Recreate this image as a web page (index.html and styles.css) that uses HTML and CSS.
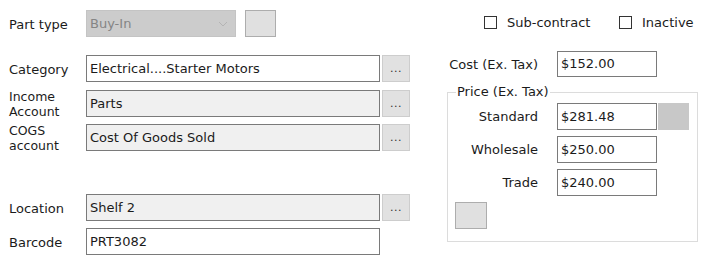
FILE: index.html
```html
<!DOCTYPE html>
<html lang="en">
<head>
  <meta charset="UTF-8" />
  <title>Part Details</title>
  <link rel="stylesheet" href="styles.css">
</head>
<body>

  <div class="form">
    <div class="left">
      <div class="row row-type">
        <label class="lbl">Part type</label>
        <div class="combo">
          <span>Buy-In</span>
          <svg width="10" height="6" viewBox="0 0 10 6"><path d="M1 1 L5 5 L9 1" fill="none" stroke="#b4b4b4" stroke-width="1"/></svg>
        </div>
        <div class="sq-btn"></div>
      </div>

      <div class="row row-cat">
        <label class="lbl">Category</label>
        <div class="field">Electrical....Starter Motors</div>
        <div class="dots">...</div>
      </div>

      <div class="row row-income">
        <label class="lbl two">Income<br>Account</label>
        <div class="field grey">Parts</div>
        <div class="dots">...</div>
      </div>

      <div class="row row-cogs">
        <label class="lbl two">COGS<br>account</label>
        <div class="field grey">Cost Of Goods Sold</div>
        <div class="dots">...</div>
      </div>

      <div class="row row-loc">
        <label class="lbl">Location</label>
        <div class="field grey">Shelf 2</div>
        <div class="dots">...</div>
      </div>

      <div class="row row-bar">
        <label class="lbl">Barcode</label>
        <div class="field">PRT3082</div>
      </div>
    </div>

    <div class="right">
      <div class="checks">
        <label class="check sub"><span class="box"></span>Sub-contract</label>
        <label class="check"><span class="box"></span>Inactive</label>
      </div>

      <div class="row price-row cost">
        <label class="plbl cost-lbl">Cost (Ex. Tax)</label>
        <div class="field money">$152.00</div>
      </div>

      <fieldset class="price">
        <legend>Price (Ex. Tax)</legend>
        <div class="row price-row">
          <label class="plbl">Standard</label>
          <div class="field money">$281.48</div>
          <div class="swatch"></div>
        </div>
        <div class="row price-row">
          <label class="plbl">Wholesale</label>
          <div class="field money">$250.00</div>
        </div>
        <div class="row price-row">
          <label class="plbl">Trade</label>
          <div class="field money">$240.00</div>
        </div>
        <div class="sq-btn small"></div>
      </fieldset>
    </div>
  </div>

</body>
</html>
```

FILE: styles.css
```css
body {
  margin: 0;
  font-family: 'DejaVu Sans', sans-serif;
  font-size: 13px;
  color: #1b1b1b;
  background: #fff;
}

.form {
  display: grid;
  grid-template-columns: 440px 1fr;
  width: 714px;
  height: 256px;
}

.left {
  padding: 10px 0 0 9px;
}

.row {
  display: flex;
  align-items: center;
}

.left .row {
  height: 27px;
}

.lbl {
  width: 77px;
  flex: none;
  line-height: 15px;
  padding-top: 2px;
}

.lbl.two {
  padding-top: 0;
  font-size: 12.5px;
}

.row-cat { margin-top: 18px; }
.row-income { margin-top: 8px; }
.row-cogs { margin-top: 7px; }
.row-loc { margin-top: 43px; }
.row-bar { margin-top: 7px; }

.combo {
  box-sizing: border-box;
  width: 150px;
  height: 27px;
  background: #cccccc;
  border: 1px solid #c4c4c4;
  color: #858585;
  display: flex;
  align-items: center;
  justify-content: space-between;
  padding: 0 7px 0 3px;
}

.sq-btn {
  box-sizing: border-box;
  width: 31px;
  height: 27px;
  margin-left: 9px;
  background: #e0e0e0;
  border: 1px solid #adadad;
}

.field {
  box-sizing: border-box;
  width: 294px;
  height: 27px;
  border: 1px solid #7a7a7a;
  background: #fff;
  padding: 0 3px;
  line-height: 25px;
  white-space: nowrap;
}

.field.grey {
  background: #f0f0f0;
}

.dots {
  box-sizing: border-box;
  width: 28px;
  height: 27px;
  margin-left: 2px;
  background: #e1e1e1;
  border: 1px solid #cdcdcd;
  text-align: center;
  line-height: 25px;
  font-size: 11px;
  color: #333;
  letter-spacing: 0.5px;
}

.right {
  padding-top: 16px;
}

.checks {
  display: flex;
  height: 13px;
  padding-left: 44px;
}

.check {
  display: flex;
  align-items: center;
  line-height: 13px;
  white-space: nowrap;
}

.check.sub {
  width: 135px;
  flex: none;
}

.box {
  box-sizing: border-box;
  flex: none;
  width: 13px;
  height: 13px;
  border: 1px solid #333;
  background: #fff;
  margin-right: 10px;
}

.cost {
  margin-top: 22px;
}

.plbl {
  width: 90px;
  text-align: right;
  margin-right: 19px;
}

.cost-lbl {
  width: 98px;
}

.field.money {
  width: 100px;
  height: 26px;
  line-height: 24px;
}

.price {
  box-sizing: border-box;
  width: 251px;
  height: 158px;
  margin: 7px 0 0 7px;
  padding: 3px 0 0 0;
  border: 1px solid #dcdcdc;
  min-width: 0;
}

.price legend {
  padding: 0 1px;
  margin-left: 8px;
  line-height: 16px;
}

.price .price-row {
  margin-bottom: 6px;
}

.price .field.money {
  height: 27px;
  line-height: 25px;
}

.swatch {
  width: 31px;
  height: 27px;
  background: #c8c8c8;
  margin-left: 1px;
}

.sq-btn.small {
  width: 32px;
  height: 27px;
  margin: 6px 0 0 7px;
}
```
